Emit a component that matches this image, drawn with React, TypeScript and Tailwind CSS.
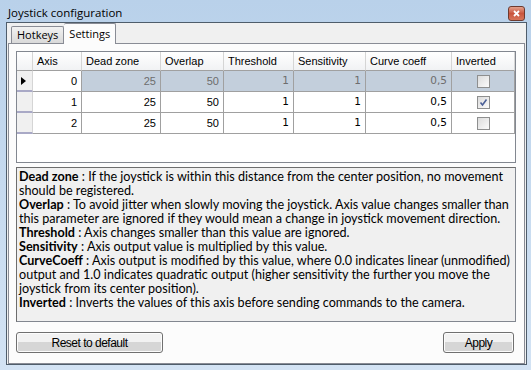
import React from 'react';

const cols = ['Axis', 'Dead zone', 'Overlap', 'Threshold', 'Sensitivity', 'Curve coeff', 'Inverted'];

const rows = [
  { axis: 0, dead: 25, overlap: 50, threshold: 1, sens: 1, curve: '0,5', inverted: false },
  { axis: 1, dead: 25, overlap: 50, threshold: 1, sens: 1, curve: '0,5', inverted: true },
  { axis: 2, dead: 25, overlap: 50, threshold: 1, sens: 1, curve: '0,5', inverted: false },
];

function CheckBox({ checked }: { checked: boolean }) {
  return (
    <div className="w-[13px] h-[13px] border border-[#8e8f8f] bg-gradient-to-br from-[#dcdcdc] to-[#fbfbfb] flex items-center justify-center">
      {checked && (
        <svg width="9" height="9" viewBox="0 0 9 9">
          <path d="M1.5 4.5 L3.5 7 L7.5 1.5" fill="none" stroke="#4a5f97" strokeWidth="1.6" />
        </svg>
      )}
    </div>
  );
}

function Button({ label, className }: { label: string; className: string }) {
  return (
    <button
      className={
        'h-[21px] rounded-[3px] border border-[#707070] bg-gradient-to-b from-[#f2f2f2] from-50% to-[#d6d6d6] to-50% shadow-[inset_0_0_0_1px_#fcfcfc] text-[12px] tracking-[-0.5px] text-black ' +
        className
      }
      style={{ fontFamily: '"Liberation Sans", Arial, sans-serif' }}
    >
      {label}
    </button>
  );
}

export default function App() {
  const cell = 'h-[21px] border-r border-b border-[#a0a0a0] flex items-center justify-end pr-[4px]';
  return (
    <div
      className="w-[531px] h-[370px] bg-gradient-to-b from-[#b9d1ea] to-[#d3e3f4] flex flex-col overflow-hidden"
      style={{ fontFamily: '"Liberation Sans", Arial, sans-serif' }}
    >
      {/* Title bar */}
      <div className="h-[22px] shrink-0 flex items-center pl-[8px] pr-[6px] relative">
        <span className="mt-[3px] text-[11.5px] text-black" style={{ fontFamily: '"Open Sans", sans-serif' }}>
          Joystick configuration
        </span>
        <div className="ml-auto mt-[4px] w-[17px] h-[15px] rounded-[3px] border border-[#6e3a2e] bg-gradient-to-b from-[#e2a08c] via-[#c9553e] to-[#d8765a] flex items-center justify-center">
          <svg width="7" height="7" viewBox="0 0 7 7">
            <path d="M1 1 L6 6 M6 1 L1 6" stroke="#fff" strokeWidth="1.8" />
          </svg>
        </div>
      </div>

      {/* Client area */}
      <div className="ml-[6px] mr-[4px] mb-[5px] flex-1 border border-[#4f5d6b] bg-[#f0f0f0] flex flex-col pl-[1px] pr-[1px]">
        {/* Tabs */}
        <div className="h-[20px] flex items-end pl-[3px] text-[11px] text-black" style={{ fontFamily: '"Open Sans", sans-serif' }}>
          <div className="h-[17px] px-[5px] border border-b-0 border-[#898c95] rounded-t-[2px] bg-gradient-to-b from-[#f2f2f2] to-[#d9d9d9] flex items-center mb-0">
            Hotkeys
          </div>
          <div className="h-[21px] -mb-[1px] px-[5px] border border-b-0 border-l-0 border-[#898c95] rounded-t-[2px] bg-[#fcfcfc] flex items-center relative z-10">
            Settings
          </div>
        </div>

        {/* Tab panel */}
        <div className="flex-1 border border-[#898c95] bg-[#fcfcfc] pl-[7px] pr-[8px] pt-[7px] flex flex-col">
          {/* Grid */}
          <div className="h-[112px] w-[500px] border border-[#828790] bg-white text-[11px] text-black">
            <div className="grid grid-cols-[16px_49px_79px_63px_70px_72px_86px_63px]">
              <div className="h-[19px] bg-gradient-to-b from-[#ffffff] to-[#f1f2f4] border-r border-b border-[#d5d5d5] border-b-[#a0a0a0]" />
              {cols.map((c) => (
                <div
                  key={c}
                  className="h-[19px] bg-gradient-to-b from-[#ffffff] to-[#f1f2f4] border-r border-b border-[#d5d5d5] border-b-[#a0a0a0] flex items-center pl-[4px] pt-[1px]"
                >
                  {c}
                </div>
              ))}
              {rows.map((r, i) => {
                const sel = i === 0;
                const s = sel ? ' bg-[#c3cfdc] text-[#6d6d6d]' : ' bg-white';
                return (
                  <React.Fragment key={r.axis}>
                    <div className="h-[21px] bg-[#f0f0f0] border-r border-b-2 border-[#d5d5d5] border-b-[#a9a9c6] flex items-center pl-[4px]">
                      {sel && (
                        <svg width="5" height="8" viewBox="0 0 5 8">
                          <path d="M0 0 L5 4 L0 8 Z" fill="#000" />
                        </svg>
                      )}
                    </div>
                    <div className={cell + ' bg-white'}>{r.axis}</div>
                    <div className={cell + s}>{r.dead}</div>
                    <div className={cell + s}>{r.overlap}</div>
                    <div className={cell + s} style={{ fontFamily: '"DejaVu Sans", sans-serif', fontSize: '10.5px' }}>
                      {r.threshold}
                    </div>
                    <div className={cell + s} style={{ fontFamily: '"DejaVu Sans", sans-serif', fontSize: '10.5px' }}>
                      {r.sens}
                    </div>
                    <div className={cell + s} style={{ fontFamily: '"DejaVu Sans", sans-serif', fontSize: '10.5px' }}>
                      {r.curve}
                    </div>
                    <div className={'h-[21px] border-r border-b border-[#a0a0a0] flex items-center justify-center' + s}>
                      <CheckBox checked={r.inverted} />
                    </div>
                  </React.Fragment>
                );
              })}
            </div>
          </div>

          {/* Description */}
          <div
            className="mt-[4px] h-[155px] w-[500px] overflow-hidden whitespace-nowrap border border-[#828790] border-t-[#6d6d6d] border-l-[#6d6d6d] bg-[#f0f0f0] pl-[2px] pt-[2px] text-[12.6px] leading-[14px] text-black"
            style={{ fontFamily: 'Lato, sans-serif' }}
          >
            <p>
              <b>Dead zone</b> : If the joystick is within this distance from the center position, no movement
              <br />
              should be registered.
            </p>
            <p>
              <b>Overlap</b> : To avoid jitter when slowly moving the joystick. Axis value changes smaller than
              <br />
              this parameter are ignored if they would mean a change in joystick movement direction.
            </p>
            <p>
              <b>Threshold</b> : Axis changes smaller than this value are ignored.
            </p>
            <p>
              <b>Sensitivity</b> : Axis output value is multiplied by this value.
            </p>
            <p>
              <b>CurveCoeff</b> : Axis output is modified by this value, where 0.0 indicates linear (unmodified)
              <br />
              output and 1.0 indicates quadratic output (higher sensitivity the further you move the
              <br />
              joystick from its center position).
            </p>
            <p>
              <b>Inverted</b> : Inverts the values of this axis before sending commands to the camera.
            </p>
          </div>

          {/* Buttons */}
          <div className="mt-[10px] w-[500px] flex justify-between pr-[2px]">
            <Button label="Reset to default" className="w-[147px]" />
            <Button label="Apply" className="w-[71px]" />
          </div>
        </div>
      </div>
    </div>
  );
}
